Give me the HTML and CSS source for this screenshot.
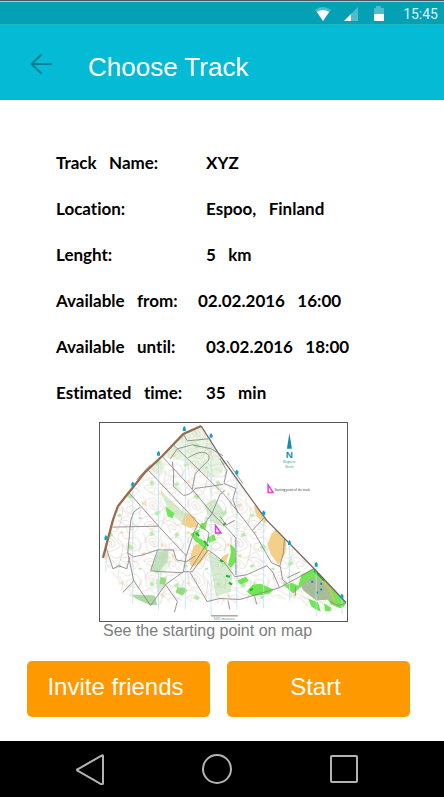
FILE: index.html
```html
<!DOCTYPE html>
<html lang="en">
<head>
<meta charset="utf-8">
<meta name="viewport" content="width=device-width, initial-scale=1">
<title>Choose Track</title>
<link rel="stylesheet" href="styles.css">
</head>
<body>
<div class="status">
  <svg class="status-icons" width="70" height="18" viewBox="0 0 70 18" aria-hidden="true">
    <path d="M0 5Q8 -1 16 5L8 16Z" fill="#4dbdcc"/><path d="M2 7Q8 3 14 7L8 16Z" fill="#fff"/>
    <path d="M29 16L43 2V16Z" fill="#4dbdcc"/><path d="M29 16L36 9V16Z" fill="#fff"/>
    <path d="M59 3h2V1h5v2h3v6H59Z" fill="#4dbdcc"/><path d="M59 9h10v6q0 1-1 1h-8q-1 0-1-1Z" fill="#fff"/>
  </svg>
  <time>15:45</time>
</div>
<header class="bar">
  <button class="back" type="button" aria-label="Back">
    <svg width="24" height="24" viewBox="0 0 24 24"><path d="M12.500 1.500L2.500 11L12.500 20.500M2.500 11H23" fill="none" stroke="#087d90" stroke-width="2"/></svg>
  </button>
  <h1>Choose Track</h1>
</header>
<main>
  <dl class="details">
    <div><dt>Track&nbsp;&nbsp; Name:</dt><dd>XYZ</dd></div>
    <div><dt>Location:</dt><dd>Espoo,&nbsp;&nbsp; Finland</dd></div>
    <div><dt>Lenght:</dt><dd>5&nbsp;&nbsp; km</dd></div>
    <div class="near"><dt>Available&nbsp;&nbsp; from:</dt><dd>02.02.2016&nbsp;&nbsp; 16:00</dd></div>
    <div><dt>Available&nbsp;&nbsp; until:</dt><dd>03.02.2016&nbsp;&nbsp; 18:00</dd></div>
    <div><dt>Estimated&nbsp;&nbsp; time:</dt><dd>35&nbsp;&nbsp; min</dd></div>
  </dl>
  <figure class="map">
    <svg viewBox="0 0 249 200" role="img" aria-label="Orienteering map">
      <defs>
        <clipPath id="area"><path d="M102 3L84 11 63 33 46 49 29 70 18 84 13 98 3 136 12 152 22 170 38 178 51 184 60 183 78 178 90 182 105 176 113 180 130 186 142 178 160 184 166 174 186 178 198 176 208 184 222 190 236 190 248 184V181L216 147 168 98 121 33Z"/></clipPath>
        <pattern id="contours" width="43" height="37" patternUnits="userSpaceOnUse">
          <path d="M3 5Q9-1 14 4T20 12 12 18 4 13ZM6 7Q10 3 13 7T15 13 8 12ZM9 8q3 0 3 3t-3-3M22 2Q25 8 31 5T40 9 38 17 29 18 23 11M27 11q4-3 8 0t-3 5-5-5M0 22Q7 18 12 23T23 22 32 25 43 22M1 28Q8 23 13 28T17 35 9 34ZM5 29q5-2 7 1t-5 3M20 27q5-5 10-1t8 4-3 6-8-2-7-7M26 29q4-2 7 2t-4 2M0 0q5 4 2 10M20 0q-4 5 0 8t2 12-4 14M43 10q-4 3-3 10" fill="none" stroke="#d0c2b8" stroke-width=".5"/>
        </pattern>
        <pattern id="shrubs" width="67" height="51" patternUnits="userSpaceOnUse">
          <path d="M8 10l4-2 1 4-4 1zM27 23l3-3 4 3-3 3zM50 8l3-1 2 4-4 1zM55 39l5-2 1 3-4 3zM17 42l3-2 2 3-4 1zM39 44h3v2h-3z" fill="#b4ebaa"/>
          <path d="M21 7l3 1-1 2-3-1zM42 29l4-1-1 4-3-1zM5 31l3-1 1 3-3 1zM61 20l2-1 1 3-2 1z" fill="#f5d9a6"/>
        </pattern>
        <path id="marker" d="M0-3L1.500-1V2H-1.500V-1Z" fill="#159fc0"/>
      </defs>
      <g clip-path="url(#area)">
        <path d="M62 34L84 11 102 3 121 33 125 48 111 56 83 38ZM68 128L58 130 51 147 62 154 72 142ZM48 45L60 36 66 42 60 53Z" fill="#e2f2dc" opacity=".8"/>
        <path d="M55 174L32 173 42 183 58 184Z" fill="#a8dba0"/>
        <path d="M58 130L69 128 68 140 58 152 52 148Z" fill="#bfe3b8"/>
        <path d="M61 68L78 84 90 94 83 101 70 91ZM109 130L133 145 132 170 117 175ZM56 158L68 154 65 166 58 172ZM105 83L116 76 126 91 122 103 111 99Z" fill="#d5edcf"/>
        <path d="M0 0H249V200H0Z" fill="url(#contours)"/>
        <path d="M0 0H249V200H0Z" fill="url(#shrubs)"/>
        <path d="M86 90L96 95 99 105 91 106 82 102 84 97ZM94 125L105 119 109 130 101 142 92 145 90 139ZM155 83L162 85 170 97 166 101 158 94ZM173 112L179 105 188 117 187 131 180 143 172 132 169 122ZM124 134L130 131 127 141 121 138Z" fill="#f3cf8a"/>
        <path d="M91 112L101 107 98 115 107 120 108 129 100 122 96 119ZM102 101L108 100 106 108 100 106ZM66 84L75 91 73 96 68 94ZM108 116l7-4 2 6-7 3zM131 122l5 4 1 14-5 6-3-3 3-12zM138 159l9-4 3 4-8 4zM148 170l6-7 8-1 13 6-4 4-17 3zM203 153l13-7 9 4 11 13 12 17-3 8-12-5-14-22-15 3-9 8-9-8 7-3 7 3zM210 177l10 4 3 10-10-6zM226 182l7 4-1 6-5-2z" fill="#6fe652"/>
        <path d="M78 166h7l3 3-5 5-7-3zM61 155l6 2-2 6-5-1z" fill="#91dd7c"/>
        <path d="M202 163L216 155 228 162 234 178 218 179 205 169Z" fill="#a9bc99"/>
        <path d="M220 154L232 168 238 184" fill="none" stroke="#d3bd6d" stroke-width="2"/>
        <path d="M213 159h2v2h-2zM222 161h2v2h-2zM218 170h2v2h-2zM222 167h2v2h-2z" fill="#168bab"/>
        <path d="M97 111l3 3M105 119l4 5M121 138l3 2M127 154l4 1M130 161l3 2M151 169l3-2M124 103l3-2M216 149l10 10" stroke="#14b82d" stroke-width="2"/>
      </g>
      <path d="M6 115V150M33 65V183M59 34V188M86 10V188M112 16V194M138 52V188M165 94V187M191 124V180M218 145V195M244 178V193" stroke="#b9e2e8" stroke-width="1" opacity=".8" fill="none"/>
      <g fill="none" stroke="#8f898a" stroke-width=".9">
        <path d="M74 22L126 73 148 101 157 113 173 141 182 145 184 158 189 162M63 34L88 61 113 91 128 106 137 116V153M49 48L99 101 110 111M29 70L59 104 87 134 84 150M13 105L59 104M31 98L28 131 34 159 51 184 66 163 84 150 93 150 109 128 125 140"/>
        <path d="M73 39Q75 50 74 64L84 73Q91 73 96 66L124 62M71 36L78 26 93 22 112 26 124 33M89 35Q100 28 106 30T109 38L96 51 93 67M126 68L121 72 113 91 106 101M28 131L34 135 43 133 58 128 74 128 77 138 87 140 96 134M58 128L51 149 63 150 84 151M84 11L88 18 109 16M40 85L34 90 31 98M66 163L78 180 75 191M34 159L23 171M6 125L13 147 19 144 27 147 30 135M91 151L108 180 121 177 141 178 181 166 216 147M125 140L136 155 148 153 168 144 174 150 181 166M99 101L94 112 87 134M110 111L108 121 91 148M121 94L127 103 136 98M121 36L128 48 125 61 137 66 134 77 139 91M154 108L165 96M186 117L185 131 181 145M189 156L202 150M197 165V174M232 180L240 184 248 182M129 179l2 9M156 175l2 8"/>
        <path d="M102 3L121 33 168 98 216 147 248 181" stroke="#73645e" stroke-width="1.300"/>
        <path d="M128 38L144 61M37 57L51 42"/>
      </g>
      <path d="M102 3L84 11 63 33 46 49 29 70 18 84 13 98 3 136" fill="none" stroke="#976b50" stroke-width="2.300"/>
      <g><use href="#marker" x="33" y="62"/><use href="#marker" x="59" y="31"/><use href="#marker" x="85" y="6"/><use href="#marker" x="112" y="13"/><use href="#marker" x="138" y="50"/><use href="#marker" x="165" y="91"/><use href="#marker" x="191" y="121"/><use href="#marker" x="218" y="143"/><use href="#marker" x="244" y="175"/><use href="#marker" x="6" y="116"/></g>
      <path d="M191 10L188.500 26H193.500Z" fill="#178cab"/>
      <g class="north"><text class="letter" x="191" y="35">N</text><text x="191" y="40">Magnetic</text><text x="191" y="45">North</text></g>
      <path d="M169.500 62.500V70H174.500ZM116.500 103.500V111H122Z" fill="none" stroke="#e53be5" stroke-width="1.500"/>
      <text class="legend" x="176" y="69">Starting point of the track</text>
      <path d="M112 194.500H139" stroke="#a16f5f"/>
      <text class="scale" x="125" y="199">500 meters</text>
    </svg>
    <figcaption>See the starting point on map</figcaption>
  </figure>
  <div class="actions">
    <button type="button">Invite friends</button>
    <button type="button">Start</button>
  </div>
</main>
<nav class="system" aria-label="System">
  <button type="button" aria-label="Back"><svg width="32" height="32" viewBox="0 0 32 32"><path d="M28 2.500Q29 2 29 3V30Q29 32 27 31L4 18Q2 17 4 16Z"/></svg></button>
  <button type="button" aria-label="Home"><svg width="32" height="32" viewBox="0 0 32 32"><circle cx="16" cy="16" r="14"/></svg></button>
  <button type="button" aria-label="Recent apps"><svg width="32" height="32" viewBox="0 0 32 32"><rect x="3" y="3" width="26" height="26" rx="1"/></svg></button>
</nav>
</body>
</html>
```
FILE: styles.css
```css
* { box-sizing: border-box; }
body {
  margin: 0;
  min-height: 100vh;
  display: flex;
  flex-direction: column;
  background: #fff;
  font-family: "Liberation Sans", Arial, sans-serif;
}
button { border: 0; padding: 0; background: none; font: inherit; color: inherit; }
svg { display: block; }
.status {
  display: flex;
  align-items: center;
  justify-content: flex-end;
  gap: 18px;
  height: 25px;
  padding: 2px 6px 0 0;
  border-top: 1px solid #4e5660;
  border-bottom: 1px solid #20b7bd;
  box-shadow: inset 0 1px #a9cbd2;
  background: #04a1b6;
  color: #d9f5f9;
  font: 14px/20px Roboto, sans-serif;
}
.bar {
  display: flex;
  align-items: center;
  gap: 35px;
  height: 75px;
  padding: 8px 29px 0;
  background: #04bad5;
  color: #fff;
}
.back { padding-bottom: 4px; }
h1 { margin: 0; font-size: 26px; font-weight: 400; line-height: 32px; }
main { flex: 1; padding: 40px 34px 24px 27px; }
.details {
  margin: 0 0 6px;
  padding-left: 29px;
  font: 700 17px/46px Lato, sans-serif;
  font-variant-ligatures: none;
  color: #000;
}
.details div { display: flex; white-space: nowrap; }
.details dt { width: 150px; }
.details .near dt { width: 142px; }
.details dd { margin: 0; }
.map { width: 65%; margin: 0 auto 21px 72px; }
.map svg { width: 100%; border: 1px solid #555; }
figcaption { padding-left: 4px; font-size: 16px; line-height: 18px; color: #7d7d7d; white-space: nowrap; }
.map text { font-family: "Open Sans", sans-serif; font-size: 4px; }
.north { fill: #1894a6; text-anchor: middle; }
.map .letter { font-family: "Liberation Sans", sans-serif; font-size: 10px; font-weight: 700; }
.map .north text:not(.letter) { font-size: 3px; }
.map .legend { font-size: 3px; fill: #222; }
.map .scale { font-size: 4px; fill: #168bab; text-anchor: middle; }
.actions { display: flex; gap: 17px; }
.actions button {
  flex: 1;
  height: 56px;
  padding: 0 6px 4px 0;
  border-radius: 5px;
  background: #ff9900;
  color: #fff;
  font-size: 24px;
}
.system {
  display: grid;
  grid-template-columns: repeat(3, 1fr);
  height: 56px;
  padding: 0 37px 0 26px;
  background: #000;
}
.system button { display: grid; place-items: center; }
.system svg { fill: none; stroke: #b3b3b3; stroke-width: 2; }
```
